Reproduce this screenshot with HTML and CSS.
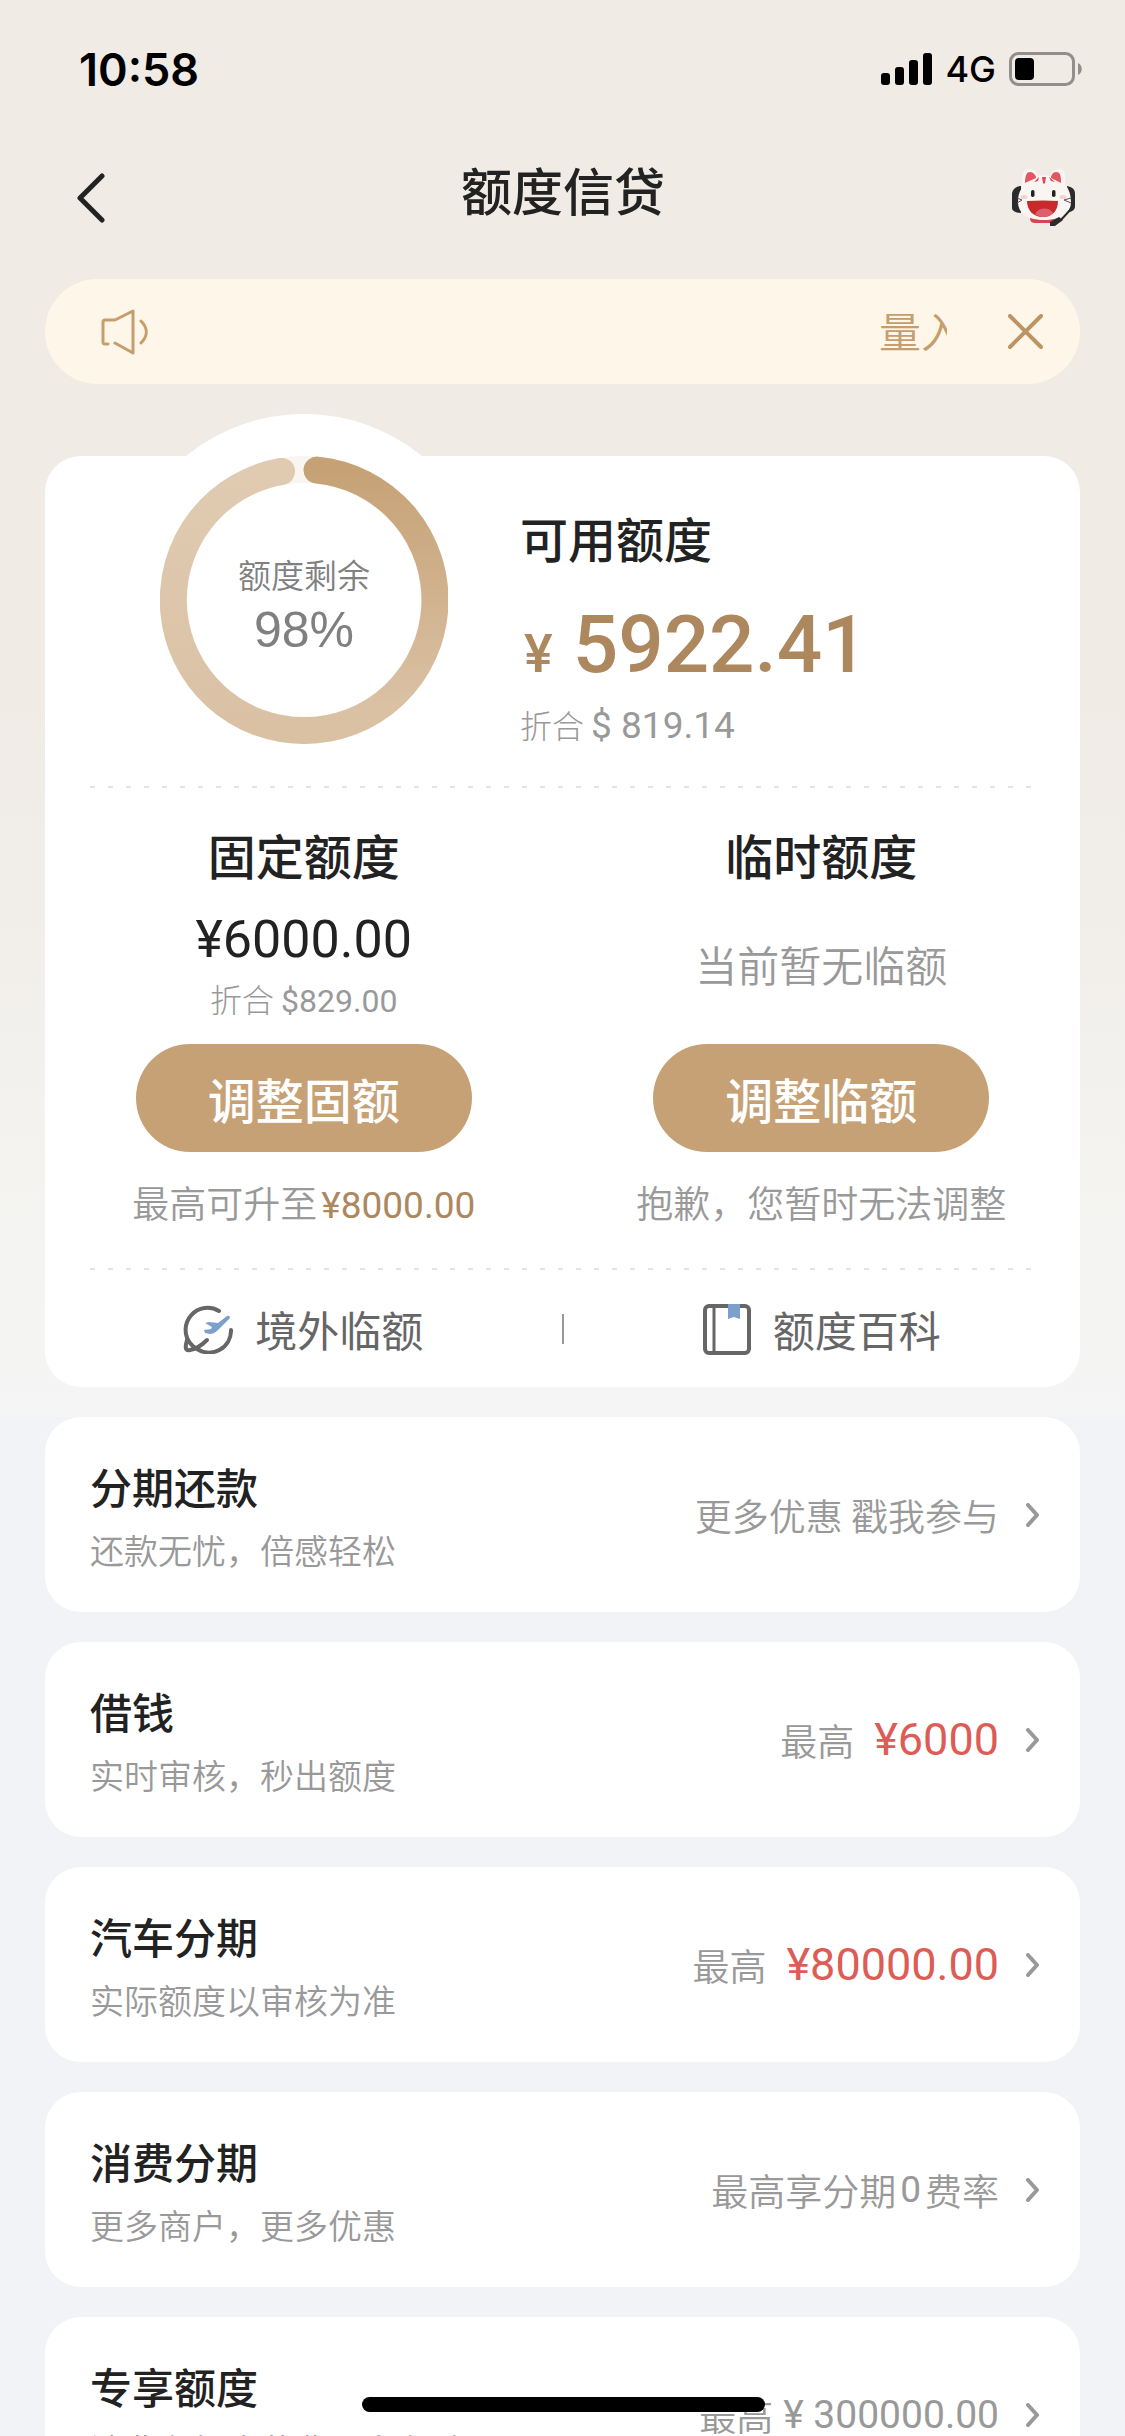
FILE: index.html
```html
<!DOCTYPE html>
<html lang="zh-CN">
<head>
<meta charset="utf-8">
<meta name="viewport" content="width=device-width, initial-scale=1">
<title>额度信贷</title>
<link rel="stylesheet" href="styles.css">
</head>
<body>
<div class="hero">
  <div class="status">
    <span class="status-time">10:58</span>
    <div class="status-right">
      <svg width="51" height="32" viewBox="0 0 51 32" aria-hidden="true">
        <rect x="0" y="20" width="9" height="12" rx="3"/>
        <rect x="14" y="14" width="9" height="18" rx="3"/>
        <rect x="28" y="7" width="9" height="25" rx="3"/>
        <rect x="42" y="0" width="9" height="32" rx="3"/>
      </svg>
      <span class="status-net">4G</span>
      <svg width="73" height="34" viewBox="0 0 73 34" aria-hidden="true">
        <rect x="1.5" y="1.5" width="63" height="31" rx="8" fill="none" stroke="#918e8b" stroke-width="3"/>
        <rect x="6" y="6" width="19" height="22" rx="4"/>
        <path d="M69 11c5 2 5 10 0 12z" fill="#918e8b"/>
      </svg>
    </div>
  </div>

  <header class="nav">
    <button class="icon-btn" type="button" aria-label="返回">
      <svg width="28" height="50" viewBox="0 0 28 50" fill="none" stroke="#222" stroke-width="5" stroke-linecap="round" stroke-linejoin="round"><path d="M25 3L3 25l22 22"/></svg>
    </button>
    <h1 class="nav-title">额度信贷</h1>
    <button class="icon-btn" type="button" aria-label="客服">
      <svg width="66" height="60" viewBox="0 0 66 60">
        <path d="M10 18C5 18 1 22 1 26v14c0 3 4 5 9 5z" fill="#2b2b2d"/>
        <path d="M56 18c5 1 8 3 8 8v12c0 4-3 6-8 6z" fill="#2b2b2d"/>
        <path d="M19 50h28c1 4-2 5-6 5H25c-4 0-6-1-6-5z" fill="#dc4350"/>
        <path d="M11 20C10 8 12 1 18 1c5 0 8 3 9 7 4-1 8-1 12 0 1-4 4-7 9-7 6 0 7 7 6 15 4 5 6 11 6 18 0 12-12 18-27 18S7 46 7 34c0-6 1-10 4-14z" fill="#f9f5f3"/>
        <path d="M14 15c0-8 2-11 5-11 3 0 6 3 6 6z" fill="#e25563"/>
        <path d="M50 15c0-8-1-11-5-11-3 0-5 3-5 6z" fill="#e25563"/>
        <path d="M31 9h4l-1 6-1 1-1-1zM28 9l-5 5 4-1zM38 9l6 5-4-1z" fill="#e04656"/>
        <ellipse cx="13" cy="29" rx="3.500" ry="2" fill="#f8cfd0"/>
        <ellipse cx="52" cy="29" rx="3.500" ry="2" fill="#f8cfd0"/>
        <rect x="20" y="22" width="3.500" height="7" rx="1.700" fill="#222"/>
        <rect x="41" y="22" width="3.500" height="7" rx="1.700" fill="#222"/>
        <path d="M16 33q17-1 31 0c0 10-6 16-15 16-10 0-16-7-16-16z" fill="#c8292b"/>
        <path d="M24 46c4-7 14-7 18-1-5 5-13 5-18 1z" fill="#dc5f6b"/>
        <path d="M6 30l5 2-5 3M60 30l-7 2 7 3" fill="none" stroke="#555" stroke-width="1"/>
        <path d="M60 41L49 53" stroke="#2b2b2d" stroke-width="2"/>
        <path d="M39 54l9-5 4 3-8 6h-5z" fill="#2b2b2d"/>
      </svg>
    </button>
  </header>

  <div class="notice">
    <svg width="48" height="46" viewBox="0 0 48 46" fill="none" stroke="#c69d6d" stroke-width="3" stroke-linecap="round" stroke-linejoin="round" aria-hidden="true">
      <path d="M7 35H4a2 2 0 0 1-2-2V13a2 2 0 0 1 2-2h10L32 2v42L14 34"/>
      <path d="M40 12c7 7 7 15 0 22"/>
    </svg>
    <div class="marquee"><span class="marquee-text">量入为出</span></div>
    <button class="icon-btn" type="button" aria-label="关闭">
      <svg width="35" height="35" viewBox="0 0 35 35" fill="none" stroke="#bf9463" stroke-width="4" stroke-linecap="round"><path d="M2 2l31 31M33 2L2 33"/></svg>
    </button>
  </div>

  <section class="card limit">
    <div class="available">
      <div class="gauge">
        <svg class="gauge-ring" width="288" height="288" viewBox="0 0 288 288" fill="none" stroke-width="27" aria-hidden="true">
          <defs>
            <linearGradient id="right" gradientUnits="userSpaceOnUse" x1="0" y1="10" x2="0" y2="250"><stop stop-color="#c6a175"/><stop offset="1" stop-color="#dac1a4"/></linearGradient>
            <linearGradient id="left" gradientUnits="userSpaceOnUse" x1="0" y1="274" x2="0" y2="10"><stop stop-color="#dac1a4"/><stop offset="1" stop-color="#e0cbb2"/></linearGradient>
          </defs>
          <circle cx="144" cy="144" r="130.500" stroke="#f9f5f0"/>
          <path d="M144 274.500A130.500 130.500 0 0 1 121.600 15.400" stroke="url(#left)" stroke-linecap="round"/>
          <path d="M157 14.100A130.500 130.500 0 0 1 144 274.500" stroke="url(#right)" stroke-linecap="round"/>
        </svg>
        <div class="gauge-label">
          <span class="gauge-name">额度剩余</span>
          <span class="gauge-value">98%</span>
        </div>
      </div>
      <div class="available-info">
        <h2 class="heading">可用额度</h2>
        <p class="balance"><span class="balance-sign">¥</span><span>5922.41</span></p>
        <p class="converted">折合 <span class="num num-large">$ 819.14</span></p>
      </div>
    </div>

    <div class="rule"></div>

    <div class="columns">
      <div class="column">
        <h2 class="heading">固定额度</h2>
        <div class="column-info">
          <p class="amount">¥6000.00</p>
          <p class="converted">折合 <span class="num">$829.00</span></p>
        </div>
        <button class="pill" type="button">调整固额</button>
        <p class="note">最高可升至<span class="num gold">¥8000.00</span></p>
      </div>
      <div class="column">
        <h2 class="heading">临时额度</h2>
        <div class="column-info"><p class="empty">当前暂无临额</p></div>
        <button class="pill" type="button">调整临额</button>
        <p class="note">抱歉，您暂时无法调整</p>
      </div>
    </div>

    <div class="rule"></div>

    <nav class="links">
      <a class="link" href="#">
        <svg width="50" height="50" viewBox="0 0 50 50" fill="none" aria-hidden="true">
          <path d="M36 7A22 22 0 0 0 7 39q3 4 7 6A22 22 0 0 0 48 26" stroke="#666" stroke-width="4" stroke-linecap="round"/>
          <path d="M4 36C2 43 2 47 7 46c6-1 11-4 17-10" stroke="#666" stroke-width="4" stroke-linecap="round"/>
          <path d="M22 19l4-1 9 1 9-7q3-1 3 2L35 26q-4 4-8 4l-5-1-1-3 7-1 1-2z" fill="#7c9fcc"/>
        </svg>
        <span>境外临额</span>
      </a>
      <span class="links-divider"></span>
      <a class="link" href="#">
        <svg width="48" height="52" viewBox="0 0 48 52" fill="none" aria-hidden="true">
          <rect x="2" y="3" width="44" height="47" rx="4" stroke="#666" stroke-width="4"/>
          <path d="M11 3v47" stroke="#666" stroke-width="3"/>
          <path d="M25 1h12v15l-6-2-6 2z" fill="#7c9fcc"/>
        </svg>
        <span>额度百科</span>
      </a>
    </nav>
  </section>
</div>

<main class="list">
  <a class="card row" href="#">
    <div class="row-text"><h3 class="row-title">分期还款</h3><p class="row-sub">还款无忧，倍感轻松</p></div>
    <span class="row-value">更多优惠 戳我参与</span>
    <svg class="chevron" width="14" height="24" viewBox="0 0 14 24"><path d="M2 2l9 10-9 10"/></svg>
  </a>
  <a class="card row" href="#">
    <div class="row-text"><h3 class="row-title">借钱</h3><p class="row-sub">实时审核，秒出额度</p></div>
    <span class="row-value">最高<span class="price">¥6000</span></span>
    <svg class="chevron" width="14" height="24" viewBox="0 0 14 24"><path d="M2 2l9 10-9 10"/></svg>
  </a>
  <a class="card row" href="#">
    <div class="row-text"><h3 class="row-title">汽车分期</h3><p class="row-sub">实际额度以审核为准</p></div>
    <span class="row-value">最高<span class="price">¥80000.00</span></span>
    <svg class="chevron" width="14" height="24" viewBox="0 0 14 24"><path d="M2 2l9 10-9 10"/></svg>
  </a>
  <a class="card row" href="#">
    <div class="row-text"><h3 class="row-title">消费分期</h3><p class="row-sub">更多商户，更多优惠</p></div>
    <span class="row-value">最高享分期<span class="digit">0</span>费率</span>
    <svg class="chevron" width="14" height="24" viewBox="0 0 14 24"><path d="M2 2l9 10-9 10"/></svg>
  </a>
  <a class="card row" href="#">
    <div class="row-text"><h3 class="row-title">专享额度</h3><p class="row-sub">消费有额度花费更自在哦</p></div>
    <span class="row-value">最高<span class="sum">¥ 300000.00</span></span>
    <svg class="chevron" width="14" height="24" viewBox="0 0 14 24"><path d="M2 2l9 10-9 10"/></svg>
  </a>
</main>
<div class="home-bar"></div>
</body>
</html>
```
FILE: styles.css
```css
* { box-sizing: border-box; margin: 0; padding: 0; }

html { scrollbar-width: none; }

body {
  background: #f2f3f6;
  color: #222;
  font-family: "Noto Sans CJK SC", sans-serif;
  font-weight: 400;
}

svg { display: block; flex: none; }
a { color: inherit; text-decoration: none; }
button { border: 0; background: none; font: inherit; cursor: pointer; }

.hero {
  padding: 0 45px 30px;
  background: linear-gradient(#f0ebe5 0, #f0ebe5 50%, #f4f4f2 88%, #f5f5f5 100%);
}

/* Status bar */
.status {
  display: flex;
  align-items: center;
  justify-content: space-between;
  height: 132px;
  margin-right: -2px;
  padding: 6px 0 0 34px;
  color: #000;
  font-family: Inter, sans-serif;
}
.status-time { font-size: 45px; font-weight: 600; }
.status-right { display: flex; align-items: center; gap: 13px; }
.status-net { font-size: 36px; font-weight: 500; }

/* Title bar */
.nav {
  display: flex;
  align-items: center;
  justify-content: space-between;
  height: 132px;
  padding: 0 3px 0 32px;
}
.nav-title {
  padding: 0 0 18px 10px;
  font-size: 51px;
  line-height: 60px;
  font-weight: 500;
}

.notice {
  display: flex;
  align-items: center;
  height: 105px;
  margin: 15px 0 72px;
  padding: 0 37px 0 56px;
  border-radius: 53px;
  background: #fef7e9;
}
.marquee {
  flex: 1;
  display: flex;
  justify-content: flex-end;
  margin: 0 61px 4px 24px;
  overflow: hidden;
}
.marquee-text {
  width: 68px;
  color: #c69d6d;
  font-size: 42px;
  line-height: 56px;
  font-weight: 350;
  white-space: nowrap;
}

.card { background: #fff; border-radius: 36px; }

/* Limit card */
.available { display: flex; }
.gauge {
  display: grid;
  place-items: center;
  flex: none;
  width: 372px;
  height: 372px;
  margin: -42px 30px 0 73px;
  border-radius: 50%;
  background: #fff;
}
.gauge-ring, .gauge-label { grid-area: 1 / 1; }
.gauge-label {
  display: flex;
  flex-direction: column;
  align-items: center;
  padding-top: 10px;
  color: #808080;
}
.gauge-name { font-size: 33px; line-height: 50px; font-weight: 350; }
.gauge-value { font-family: "Liberation Sans", sans-serif; font-size: 50px; line-height: 62px; }

.available-info { padding-top: 51px; }
.heading { font-size: 48px; line-height: 60px; font-weight: 500; }
.balance {
  display: flex;
  align-items: baseline;
  gap: 20px;
  margin-top: 28px;
  padding-left: 4px;
  color: #ad875e;
  font-family: Roboto, sans-serif;
  font-size: 80px;
  line-height: 100px;
  font-weight: 500;
}
.balance-sign { font-size: 54px; }
.converted { color: #999; font-size: 32px; line-height: 40px; font-weight: 300; }
.num { font-family: Roboto, sans-serif; font-weight: 400; line-height: 1; }
.num-large { font-size: 37px; }

.rule {
  height: 2px;
  margin: 0 45px;
  background: repeating-linear-gradient(90deg, #e4e4e4 0 5px, transparent 5px 18px);
}

.columns { display: grid; grid-template-columns: 1fr 1fr; padding: 36px 0 42px; }
.column { display: flex; flex-direction: column; align-items: center; }
.column-info {
  display: flex;
  flex-direction: column;
  align-items: center;
  justify-content: center;
  gap: 8px;
  height: 160px;
}
.amount { font-family: Roboto, sans-serif; font-size: 52px; line-height: 60px; }
.empty { color: #999; font-size: 42px; line-height: 56px; font-weight: 350; }
.pill {
  width: 65%;
  height: 108px;
  border-radius: 54px;
  background: #c7a176;
  color: #fff;
  font-size: 48px;
  font-weight: 500;
}
.note { margin-top: 26px; color: #999; font-size: 37px; line-height: 48px; font-weight: 350; }
.gold { margin-left: 4px; color: #ad875e; }

.links {
  display: grid;
  grid-template-columns: 1fr 2px 1fr;
  align-items: center;
  height: 117px;
}
.links-divider { height: 30px; background: #999; }
.link {
  display: flex;
  align-items: center;
  justify-content: center;
  gap: 22px;
  color: #666;
  font-size: 42px;
  line-height: 56px;
}

/* Product list */
.list { display: grid; gap: 30px; padding: 0 45px 30px; }
.row { display: flex; align-items: center; padding: 41px 40px 40px 45px; }
.row-text { flex: 1; display: grid; gap: 14px; }
.row-title { font-size: 42px; line-height: 56px; font-weight: 500; }
.row-sub { color: #999; font-size: 34px; line-height: 44px; font-weight: 350; }
.row-value {
  display: flex;
  align-items: center;
  margin-right: 27px;
  color: #999;
  font-size: 37px;
  line-height: 48px;
  font-weight: 350;
  white-space: pre;
}
.price, .digit, .sum { font-family: Roboto, sans-serif; font-weight: 400; }
.price { margin-left: 20px; color: #dd5c56; font-size: 45px; }
.digit { margin: 0 4px; }
.sum { margin-left: 10px; font-size: 39px; }
.chevron { fill: none; stroke: #999; stroke-width: 4; stroke-linecap: round; stroke-linejoin: round; }

.home-bar {
  position: fixed;
  bottom: 24px;
  left: 50%;
  width: 403px;
  height: 15px;
  margin-left: -201px;
  border-radius: 8px;
  background: #000;
}
```
